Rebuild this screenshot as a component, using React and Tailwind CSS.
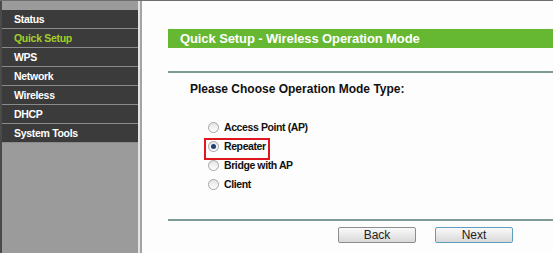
import React from "react";

const menu = ["Status", "Quick Setup", "WPS", "Network", "Wireless", "DHCP", "System Tools"];
const modes = ["Access Point (AP)", "Repeater", "Bridge with AP", "Client"];

const Radio = ({ checked }) => (
  <span className="w-[11px] h-[11px] rounded-full border border-[#a5a5a5] bg-gradient-to-b from-[#e4e4e4] to-[#ffffff] flex items-center justify-center">
    {checked && <span className="w-[5px] h-[5px] rounded-full bg-[#1f3f6e]" />}
  </span>
);

const App = () => (
  <div
    className="w-[553px] h-[253px] flex border-t border-[#6e6e6e] overflow-hidden"
    style={{ fontFamily: '"Liberation Sans", Arial, sans-serif' }}
  >
    <aside className="w-[138px] shrink-0 bg-[#9b9b9b] border-l-2 border-[#4a4a4a] pt-[9px]">
      {menu.map((item) => (
        <div
          key={item}
          className={`h-[19px] bg-[#3b3b3b] border-b border-[#8a8a8a] pl-[12px] text-[10.5px] tracking-[-0.3px] font-bold leading-[18px] ${
            item === "Quick Setup" ? "text-[#a3cf2a]" : "text-white"
          }`}
        >
          {item}
        </div>
      ))}
    </aside>
    <div className="w-[2px] shrink-0 bg-[#e4e4e4]" />
    <div className="w-[2px] shrink-0 bg-[#a3a3a3]" />
    <main className="flex-1 bg-[#fdfdfd] pl-[26px] pt-[28px]">
      <div className="h-[19px] bg-[#66b832] pl-[12px] text-white text-[13px] tracking-[-0.1px] font-bold leading-[19px]">
        Quick Setup - Wireless Operation Mode
      </div>
      <div className="mt-[23px] h-[2px] bg-[#7e9c97]" />
      <h2 className="mt-[8px] pl-[22px] text-[12px] font-bold leading-[16px] text-[#111]">
        Please Choose Operation Mode Type:
      </h2>
      <div className="mt-[21px] pl-[40px] flex flex-col">
        {modes.map((m) => (
          <div key={m} className="relative h-[19px] flex items-center gap-[5px]">
            <Radio checked={m === "Repeater"} />
            <span className="text-[10.5px] tracking-[-0.4px] font-bold text-[#111]">{m}</span>
            {m === "Repeater" && (
              <span className="absolute left-[-4px] top-[1px] w-[66px] h-[22px] border-2 border-[#e0161e]" />
            )}
          </div>
        ))}
      </div>
      <div className="mt-[25px] h-[2px] bg-[#7e9c97]" />
      <div className="mt-[6px] pl-[170px] flex gap-[19px]">
        <button className="w-[78px] h-[16px] border border-[#8d8d8d] rounded-[2px] bg-gradient-to-b from-[#fafafa] to-[#d9d9d9] text-[12px] leading-[14px] text-[#222]">
          Back
        </button>
        <button className="w-[78px] h-[16px] border border-[#5f9fbd] rounded-[2px] bg-gradient-to-b from-[#fafafa] to-[#d9d9d9] text-[12px] leading-[14px] text-[#222]">
          Next
        </button>
      </div>
    </main>
  </div>
);

export default App;
